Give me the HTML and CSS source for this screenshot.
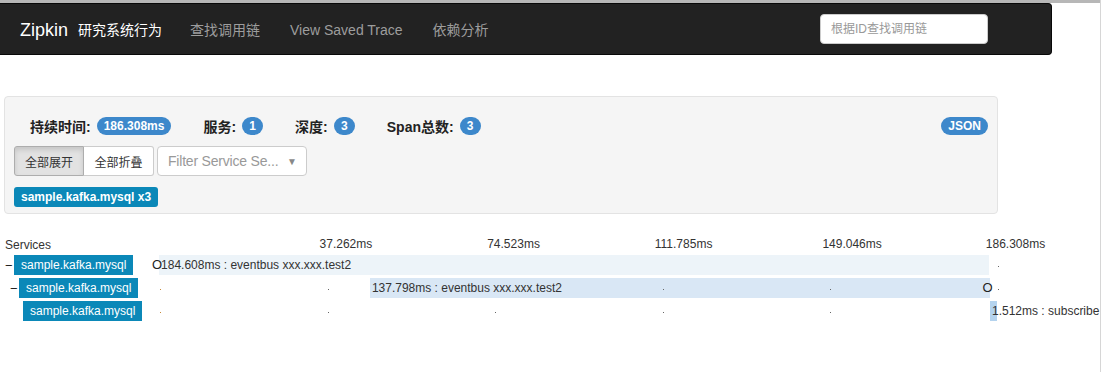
FILE: index.html
```html
<!DOCTYPE html>
<html lang="zh-CN">
<head>
  <meta charset="UTF-8">
  <title>Zipkin - Trace</title>
  <link rel="stylesheet" href="styles.css">
</head>
<body>
  <div class="top-line"></div>

  <nav class="navbar">
    <a class="brand" href="#">Zipkin</a>
    <span class="brand-sub">研究系统行为</span>
    <ul class="nav-links">
      <li><a href="#">查找调用链</a></li>
      <li><a href="#">View Saved Trace</a></li>
      <li><a href="#">依赖分析</a></li>
    </ul>
    <input class="trace-search" type="text" placeholder="根据ID查找调用链">
  </nav>

  <main class="page">
    <section class="summary">
      <div class="summary-row">
        <ul class="stats">
          <li><strong>持续时间:</strong><span class="badge">186.308ms</span></li>
          <li><strong>服务:</strong><span class="badge">1</span></li>
          <li><strong>深度:</strong><span class="badge">3</span></li>
          <li><strong>Span总数:</strong><span class="badge">3</span></li>
        </ul>
        <a class="badge" href="#">JSON</a>
      </div>

      <div class="controls">
        <div class="btn-group">
          <button class="btn active">全部展开</button>
          <button class="btn">全部折叠</button>
        </div>
        <div class="service-select">
          <span class="placeholder">Filter Service Se...</span>
          <span class="caret">&#9660;</span>
        </div>
      </div>

      <div class="service-tags">
        <span class="service-tag">sample.kafka.mysql x3</span>
      </div>
    </section>

    <section class="timeline">
      <div class="timeline-head">
        <div class="service-col">Services</div>
        <div class="track">
          <span class="tick" style="left: 20%">37.262ms</span>
          <span class="tick" style="left: 40%">74.523ms</span>
          <span class="tick" style="left: 60%">111.785ms</span>
          <span class="tick" style="left: 80%">149.046ms</span>
          <span class="tick" style="left: 99.5%">186.308ms</span>
        </div>
      </div>

      <div class="span-row">
        <div class="service-col depth-0">
          <span class="toggle">&minus;</span>
          <span class="service-name">sample.kafka.mysql</span>
        </div>
        <div class="track">
          <span class="dot first"></span>
          <span class="dot" style="left: 20%"></span>
          <span class="dot" style="left: 40%"></span>
          <span class="dot" style="left: 60%"></span>
          <span class="dot" style="left: 80%"></span>
          <span class="dot" style="left: 100%"></span>
          <div class="bar level-0" style="left: 0.84%; width: 99.09%">184.608ms : eventbus xxx.xxx.test2</div>
          <span class="mark" style="left: 0">O</span>
        </div>
      </div>

      <div class="span-row">
        <div class="service-col depth-1">
          <span class="toggle">&minus;</span>
          <span class="service-name">sample.kafka.mysql</span>
        </div>
        <div class="track">
          <span class="dot first"></span>
          <span class="dot" style="left: 20%"></span>
          <div class="bar level-1" style="left: 26%; width: 73.96%">137.798ms : eventbus xxx.xxx.test2</div>
          <span class="dot" style="left: 60%"></span>
          <span class="dot" style="left: 80%"></span>
          <span class="dot" style="left: 100%"></span>
          <span class="mark" style="left: 99.1%">O</span>
        </div>
      </div>

      <div class="span-row">
        <div class="service-col depth-2">
          <span class="toggle hidden">&minus;</span>
          <span class="service-name">sample.kafka.mysql</span>
        </div>
        <div class="track">
          <span class="dot first"></span>
          <span class="dot" style="left: 20%"></span>
          <span class="dot" style="left: 40%"></span>
          <span class="dot" style="left: 60%"></span>
          <span class="dot" style="left: 80%"></span>
          <div class="bar level-2" style="left: 100%; width: 0.81%">1.512ms : subscribe</div>
        </div>
      </div>
    </section>
  </main>
</body>
</html>
```

FILE: styles.css
```css
/* Base */
html, body {
  margin: 0;
  padding: 0;
}

body {
  font-family: "Liberation Sans", Arial, "Noto Sans CJK SC", sans-serif;
  font-size: 14px;
  color: #333;
  background-color: #fff;
  min-height: 100vh;
  border-right: 1px solid #d6d6d6;
  box-sizing: border-box;
  overflow: hidden;
}

a {
  text-decoration: none;
}

.top-line {
  height: 3px;
  background-color: #b7b7b7;
}

/* Navbar */
.navbar {
  width: 1052px;
  height: 52px;
  box-sizing: border-box;
  background-color: #222;
  border: 1px solid #080808;
  border-left: none;
  border-radius: 0 4px 4px 0;
  display: flex;
  align-items: center;
  line-height: 20px;
  padding-top: 2px;
}

.brand {
  color: #fff;
  font-size: 18px;
  margin-left: 20px;
}

.brand-sub {
  color: #fff;
  font-size: 14px;
  margin-left: 10px;
}

.nav-links {
  list-style: none;
  display: flex;
  margin: 0 0 0 13px;
  padding: 0;
}

.nav-links a {
  display: block;
  padding: 0 15px;
  color: #9d9d9d;
  font-size: 14px;
  line-height: 20px;
}

.trace-search {
  margin-left: auto;
  margin-right: 63px;
  margin-top: -2px;
  width: 168px;
  height: 30px;
  box-sizing: border-box;
  border: 1px solid #ccc;
  border-radius: 4px;
  padding: 0 10px;
  font-family: inherit;
  font-size: 12px;
}

.trace-search::placeholder {
  color: #999;
}

/* Summary panel */
.page {
  padding: 41px 0 0 4px;
}

.summary {
  width: 994px;
  box-sizing: border-box;
  background-color: #f5f5f5;
  border: 1px solid #e3e3e3;
  border-radius: 4px;
  padding: 20px 9px 6px;
}

.summary-row {
  display: flex;
  align-items: center;
  justify-content: space-between;
  height: 18px;
  padding-left: 16px;
}

.stats {
  list-style: none;
  margin: 0;
  padding: 0;
  display: flex;
  gap: 32px;
}

.stats li {
  display: flex;
  align-items: center;
  gap: 6px;
}

.stats strong {
  color: #222;
}

.badge {
  display: inline-block;
  min-width: 7px;
  padding: 3px 7px;
  font-size: 12px;
  font-weight: bold;
  line-height: 12px;
  color: #fff;
  text-align: center;
  background-color: #3d88cb;
  border-radius: 10px;
}

.controls {
  display: flex;
  gap: 3px;
  margin-top: 11px;
}

.btn-group {
  display: flex;
}

.btn {
  width: 70px;
  height: 30px;
  padding: 0;
  font-family: inherit;
  font-size: 12px;
  color: #333;
  background-color: #fff;
  border: 1px solid #ccc;
  cursor: pointer;
}

.btn:first-child {
  border-radius: 3px 0 0 3px;
}

.btn:last-child {
  border-radius: 0 3px 3px 0;
  border-left: none;
}

.btn.active {
  background-color: #e2e2e2;
  border-color: #adadad;
  box-shadow: inset 0 3px 5px rgba(0, 0, 0, 0.125);
}

.service-select {
  width: 150px;
  height: 30px;
  box-sizing: border-box;
  display: flex;
  align-items: center;
  justify-content: space-between;
  padding: 0 9px 0 10px;
  background-color: #fff;
  border: 1px solid #ccc;
  border-radius: 4px;
}

.service-select .placeholder {
  color: #999;
  font-size: 14px;
  letter-spacing: -0.2px;
}

.service-select .caret {
  color: #888;
  font-size: 10px;
}

.service-tags {
  margin-top: 11px;
}

.service-tag {
  display: inline-block;
  height: 20px;
  line-height: 20px;
  padding: 0 7px;
  font-size: 12px;
  font-weight: bold;
  color: #fff;
  background-color: #0b88b8;
  border-radius: 3px;
}

/* Timeline */
.timeline {
  margin-top: 22px;
  font-size: 12px;
}

.timeline-head,
.span-row {
  display: flex;
}

.timeline-head {
  height: 18px;
  align-items: center;
  margin-bottom: 1px;
}

.span-row {
  height: 20px;
  margin-bottom: 3px;
}

.service-col {
  width: 148px;
  flex-shrink: 0;
  display: flex;
  align-items: center;
  padding-left: 1px;
  box-sizing: border-box;
}

.service-col.depth-1 { padding-left: 6px; }
.service-col.depth-2 { padding-left: 10px; }

.toggle {
  width: 9px;
  font-size: 13px;
  color: #222;
}

.toggle.hidden {
  visibility: hidden;
}

.service-name {
  display: inline-block;
  height: 20px;
  line-height: 20px;
  padding: 0 7px;
  color: #fff;
  background-color: #0b88b8;
}

.track {
  position: relative;
  width: 838px;
  flex-shrink: 0;
  height: 100%;
}

.tick {
  position: absolute;
  top: 1px;
  white-space: nowrap;
}

.dot {
  position: absolute;
  top: 11px;
  margin-left: 8px;
  width: 1px;
  height: 1px;
  background-color: #666;
}

.dot.first {
  left: 0;
  background-color: #c7893a;
}

.bar {
  position: absolute;
  top: 0;
  height: 20px;
  line-height: 20px;
  padding-left: 2px;
  box-sizing: border-box;
  white-space: nowrap;
  color: #333;
}

.bar.level-0 { background-color: #edf4f9; }
.bar.level-1 { background-color: #d9e7f5; }
.bar.level-2 { background-color: #b4d3ee; }

.mark {
  position: absolute;
  top: 0;
  line-height: 20px;
  font-size: 13px;
  color: #222;
}
```
